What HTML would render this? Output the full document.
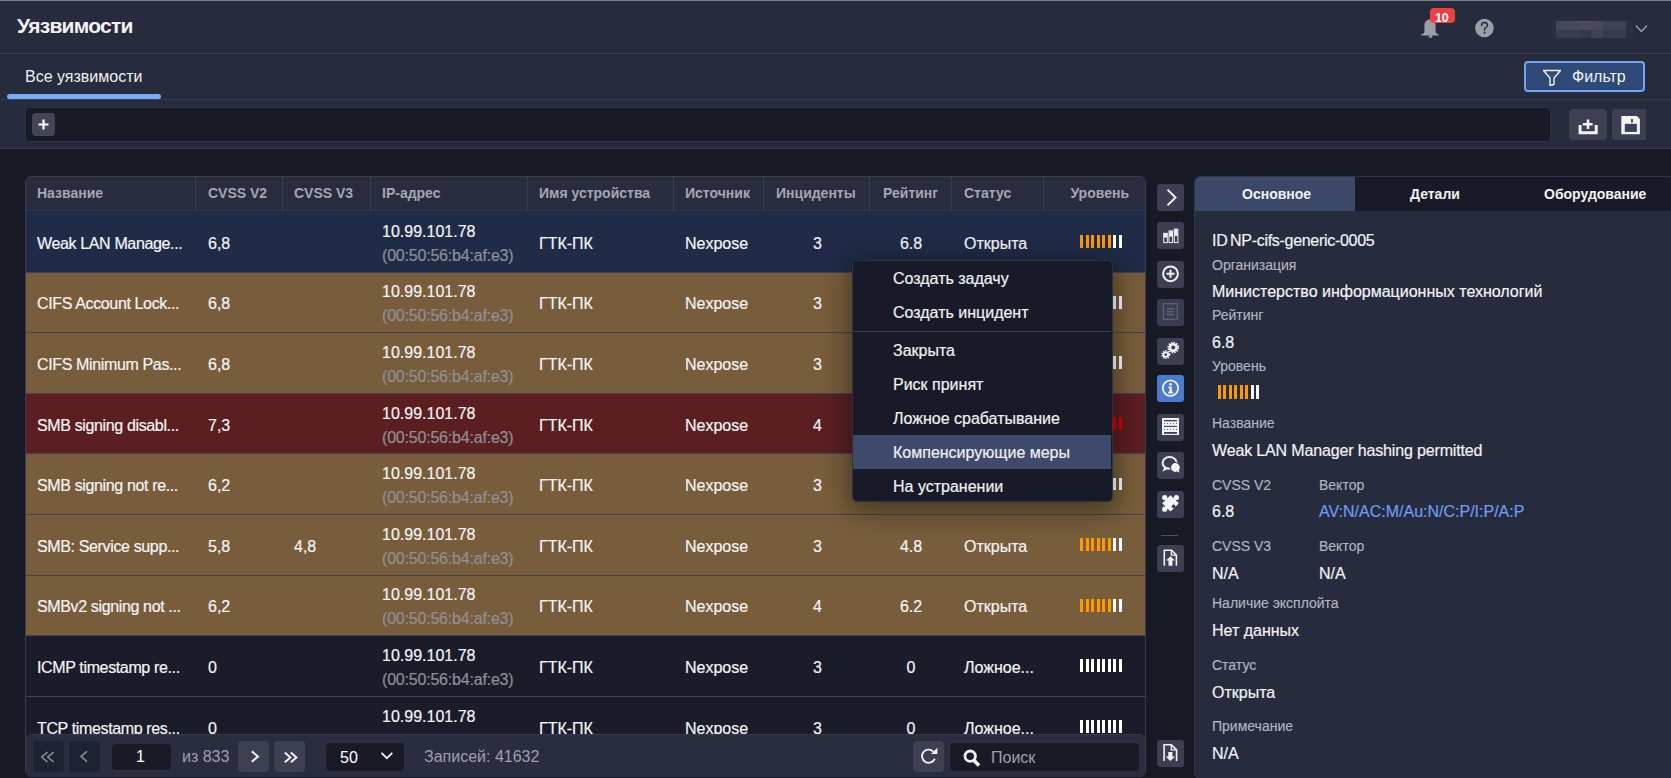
<!DOCTYPE html><html><head><meta charset="utf-8"><style>
*{box-sizing:border-box;margin:0;padding:0}
html,body{width:1671px;height:778px;overflow:hidden;background:#171925;font-family:"Liberation Sans",sans-serif;color:#fff}
.a{position:absolute}
.t{position:absolute;white-space:nowrap;line-height:1}
.hl{position:absolute;left:0;width:1671px;height:1px;background:#393d4f}
.th{position:absolute;top:186px;font-size:14px;font-weight:700;color:#a5a7b0;white-space:nowrap;line-height:1}
.cs{position:absolute;top:177px;width:1px;height:34px;background:#393d50}
.row{position:absolute;left:26px;width:1119px}
.rt{position:absolute;font-size:16px;color:#f4f4f6;white-space:nowrap;line-height:1;-webkit-text-stroke:0.2px currentColor}
.ip2{color:#8f9095;letter-spacing:-0.2px}
.bars{position:absolute;height:13px}
.bars i{position:absolute;top:0;width:3px;height:13px}
.sb{position:absolute;left:1157px;width:27px;height:27px;background:#3a3e50;border-radius:3px}
.sb svg{position:absolute;left:0;top:0}
.mi{position:absolute;left:893px;font-size:16px;color:#f0f0f2;white-space:nowrap;line-height:1;-webkit-text-stroke:0.2px currentColor}
.dl{position:absolute;left:1212px;margin-top:-1px;font-size:14px;color:#b4b6be;white-space:nowrap;line-height:1;-webkit-text-stroke:0.15px currentColor}
.dv{position:absolute;left:1212px;font-size:16px;color:#f2f2f4;white-space:nowrap;line-height:1;-webkit-text-stroke:0.2px currentColor}
.pb{position:absolute;top:741px;width:31px;height:31px;border-radius:4px}
</style></head><body>
<div class="a" style="left:0;top:0;width:1671px;height:149px;background:#262b3d"></div>
<div class="a" style="left:0;top:0;width:1671px;height:1px;background:#7f838e"></div>
<div class="t" style="left:17px;top:15px;font-size:21px;font-weight:700;color:#f2f2f4;letter-spacing:-0.75px">Уязвимости</div>
<div class="hl" style="top:53px"></div>
<div class="t" style="left:25px;top:69px;font-size:16px;color:#f0f0f2;">Все уязвимости</div>
<div class="a" style="left:7px;top:94px;width:154px;height:5px;border-radius:3px;background:#7aabf7"></div>
<div class="hl" style="top:99px"></div>
<div class="hl" style="top:148px"></div>
<svg class="a" style="left:1415px;top:15px" width="30" height="24" viewBox="0 0 30 24"><path d="M15 4.5c-3.6 0-5.6 2.6-5.6 6.2v5.8c0 1.2-1 2.4-3.4 3.2v0.9h18v-0.9c-2.4-0.8-3.4-2-3.4-3.2v-5.8c0-3.6-2-6.2-5.6-6.2z" fill="#9c9ea6"/><path d="M13.7 20.2h3.6v1.4c0 .7-.8 1.3-1.8 1.3s-1.8-.6-1.8-1.3z" fill="#9c9ea6"/></svg>
<div class="a" style="left:1430px;top:8px;width:25px;height:15px;background:#ee4043;border-radius:4px"></div>
<div class="t" style="left:1435px;top:12px;font-size:12.5px;font-weight:700;color:#fff;letter-spacing:-0.3px">10</div>
<svg class="a" style="left:1474px;top:18px" width="21" height="21" viewBox="0 0 21 21"><circle cx="10.4" cy="10" r="9.3" fill="#9c9ea6"/><path d="M7.6 7.6c0-1.8 1.3-3 2.9-3s2.9 1.1 2.9 2.7c0 1.6-1.3 2.1-2.2 2.8-.6.5-.7.9-.7 1.8" stroke="#272b3d" stroke-width="1.5" fill="none" stroke-linecap="round"/><circle cx="10.5" cy="14.6" r="1.05" fill="#272b3d"/></svg>
<div class="a" style="left:1552px;top:20px;width:81px;height:19px;background:#2b2f41"></div>
<div class="a" style="left:1556.20px;top:21px;width:11.7px;height:9px;background:#45485a"></div>
<div class="a" style="left:1556.20px;top:30px;width:11.7px;height:8px;background:#3a3d4e"></div>
<div class="a" style="left:1567.88px;top:21px;width:11.7px;height:9px;background:#434a5c"></div>
<div class="a" style="left:1567.88px;top:30px;width:11.7px;height:8px;background:#3a3c4e"></div>
<div class="a" style="left:1579.56px;top:21px;width:11.7px;height:9px;background:#494a5a"></div>
<div class="a" style="left:1579.56px;top:30px;width:11.7px;height:8px;background:#35384a"></div>
<div class="a" style="left:1591.24px;top:21px;width:11.7px;height:9px;background:#46485a"></div>
<div class="a" style="left:1591.24px;top:30px;width:11.7px;height:8px;background:#3d4252"></div>
<div class="a" style="left:1602.92px;top:21px;width:11.7px;height:9px;background:#3f4454"></div>
<div class="a" style="left:1602.92px;top:30px;width:11.7px;height:8px;background:#363a4c"></div>
<div class="a" style="left:1614.60px;top:21px;width:11.7px;height:9px;background:#3e4252"></div>
<div class="a" style="left:1614.60px;top:30px;width:11.7px;height:8px;background:#383b4d"></div>
<svg class="a" style="left:1633px;top:22px" width="16" height="12" viewBox="0 0 16 12"><path d="M2.8 3.5l5.6 5.9 5.6-5.9" stroke="#9a9ca6" stroke-width="1.5" fill="none"/></svg>
<div class="a" style="left:1524px;top:61px;width:121px;height:31px;background:#2f4a78;border:2px solid #76a6f0;border-radius:4px"></div>
<svg class="a" style="left:1542px;top:69px" width="20" height="17" viewBox="0 0 20 17"><path d="M1.5 1.5h17l-6.5 7.5v6.5l-4 1v-7.5z" stroke="#f0f0f4" stroke-width="1.4" fill="none" stroke-linejoin="round"/></svg>
<div class="t" style="left:1572px;top:69px;font-size:16px;color:#f2f2f4">Фильтр</div>
<div class="a" style="left:25px;top:107px;width:1526px;height:35px;background:#181a26;border:1px solid #30344a;border-radius:4px"></div>
<div class="a" style="left:32px;top:113px;width:23px;height:23px;background:#424657;border-radius:4px"></div>
<svg class="a" style="left:32px;top:113px" width="23" height="23" viewBox="0 0 23 23"><path d="M11.5 6.5v10M6.5 11.5h10" stroke="#fff" stroke-width="2.2"/></svg>
<div class="a" style="left:1569px;top:109px;width:38px;height:31px;background:#3c4052;border-radius:4px"></div>
<svg class="a" style="left:1569px;top:109px" width="38" height="31" viewBox="0 0 38 31"><path d="M11.1 16.1v7.6h16.1v-7.6" stroke="#f2f2f4" stroke-width="3" fill="none"/><path d="M19 10.6v9.3M13.8 15.25h9.8" stroke="#f2f2f4" stroke-width="2.6"/></svg>
<div class="a" style="left:1612px;top:109px;width:34px;height:31px;background:#3c4052;border-radius:4px 0 0 4px"></div>
<svg class="a" style="left:1612px;top:109px" width="34" height="31" viewBox="0 0 34 31"><path d="M9.3 7.1h15.6l3 3v15.1h-18.6z" fill="#f2f2f4"/><rect x="12.8" y="14.8" width="12.1" height="8.1" fill="#3c4052"/><rect x="19.1" y="10" width="1.8" height="3.6" fill="#3c4052"/></svg>
<div class="a" style="left:25px;top:176px;width:1121px;height:601px;border:1px solid #393d50;border-radius:6px;background:#1a1c29;overflow:hidden">
<div class="a" style="left:0;top:0;width:1121px;height:34px;background:#282c3e"></div>
</div>
<div class="a" style="left:26px;top:210px;width:1119px;height:1px;background:#33374a"></div>
<div class="cs" style="left:195px"></div>
<div class="cs" style="left:282px"></div>
<div class="cs" style="left:370px"></div>
<div class="cs" style="left:527px"></div>
<div class="cs" style="left:673px"></div>
<div class="cs" style="left:763px"></div>
<div class="cs" style="left:869px"></div>
<div class="cs" style="left:951px"></div>
<div class="cs" style="left:1043px"></div>
<div class="th" style="left:37px">Название</div>
<div class="th" style="left:208px">CVSS V2</div>
<div class="th" style="left:294px">CVSS V3</div>
<div class="th" style="left:382px">IP-адрес</div>
<div class="th" style="left:539px">Имя устройства</div>
<div class="th" style="left:685px">Источник</div>
<div class="th" style="left:776px">Инциденты</div>
<div class="th" style="left:883px">Рейтинг</div>
<div class="th" style="left:964px">Статус</div>
<div class="th" style="left:1029px;width:100px;text-align:right">Уровень</div>
<div class="row" style="top:211px;height:61.1px;background:#1f2b47"></div>
<div class="rt" style="left:37px;top:235.8px;letter-spacing:-0.36px">Weak LAN Manage...</div>
<div class="rt" style="left:208px;top:235.8px">6,8</div>
<div class="rt" style="left:382px;top:223.8px">10.99.101.78</div>
<div class="rt ip2" style="left:382px;top:247.8px">(00:50:56:b4:af:e3)</div>
<div class="rt" style="left:539px;top:235.8px">ГТК-ПК</div>
<div class="rt" style="left:685px;top:235.8px">Nexpose</div>
<div class="rt" style="left:813px;top:235.8px">3</div>
<div class="rt" style="left:870px;width:82px;text-align:center;top:235.8px">6.8</div>
<div class="rt" style="left:964px;top:235.8px">Открыта</div>
<div class="bars" style="left:1080px;top:235.20px;width:45px"><i style="left:0.00px;background:#ff9900;height:12.8px"></i><i style="left:5.57px;background:#ff9900;height:12.8px"></i><i style="left:11.14px;background:#ff9900;height:12.8px"></i><i style="left:16.71px;background:#ff9900;height:12.8px"></i><i style="left:22.28px;background:#ff9900;height:12.8px"></i><i style="left:27.85px;background:#ff9900;height:12.8px"></i><i style="left:33.42px;background:#ffffff;height:12.8px"></i><i style="left:38.99px;background:#ffffff;height:12.8px"></i></div>
<div class="row" style="top:272.1px;height:60.6px;background:#775d3b"></div>
<div class="a" style="left:26px;top:271.6px;width:1119px;height:1px;background:#414457"></div>
<div class="rt" style="left:37px;top:296.4px;letter-spacing:-0.36px">CIFS Account Lock...</div>
<div class="rt" style="left:208px;top:296.4px">6,8</div>
<div class="rt" style="left:382px;top:284.4px">10.99.101.78</div>
<div class="rt ip2" style="left:382px;top:308.4px">(00:50:56:b4:af:e3)</div>
<div class="rt" style="left:539px;top:296.4px">ГТК-ПК</div>
<div class="rt" style="left:685px;top:296.4px">Nexpose</div>
<div class="rt" style="left:813px;top:296.4px">3</div>
<div class="rt" style="left:870px;width:82px;text-align:center;top:296.4px">6.8</div>
<div class="rt" style="left:964px;top:296.4px">Открыта</div>
<div class="bars" style="left:1080px;top:295.80px;width:45px"><i style="left:0.00px;background:#ff9900;height:12.8px"></i><i style="left:5.57px;background:#ff9900;height:12.8px"></i><i style="left:11.14px;background:#ff9900;height:12.8px"></i><i style="left:16.71px;background:#ff9900;height:12.8px"></i><i style="left:22.28px;background:#ff9900;height:12.8px"></i><i style="left:27.85px;background:#ff9900;height:12.8px"></i><i style="left:33.42px;background:#ffffff;height:12.8px"></i><i style="left:38.99px;background:#ffffff;height:12.8px"></i></div>
<div class="row" style="top:332.7px;height:60.6px;background:#775d3b"></div>
<div class="a" style="left:26px;top:332.2px;width:1119px;height:1px;background:#414457"></div>
<div class="rt" style="left:37px;top:357.0px;letter-spacing:-0.36px">CIFS Minimum Pas...</div>
<div class="rt" style="left:208px;top:357.0px">6,8</div>
<div class="rt" style="left:382px;top:345.0px">10.99.101.78</div>
<div class="rt ip2" style="left:382px;top:369.0px">(00:50:56:b4:af:e3)</div>
<div class="rt" style="left:539px;top:357.0px">ГТК-ПК</div>
<div class="rt" style="left:685px;top:357.0px">Nexpose</div>
<div class="rt" style="left:813px;top:357.0px">3</div>
<div class="rt" style="left:870px;width:82px;text-align:center;top:357.0px">6.8</div>
<div class="rt" style="left:964px;top:357.0px">Открыта</div>
<div class="bars" style="left:1080px;top:356.40px;width:45px"><i style="left:0.00px;background:#ff9900;height:12.8px"></i><i style="left:5.57px;background:#ff9900;height:12.8px"></i><i style="left:11.14px;background:#ff9900;height:12.8px"></i><i style="left:16.71px;background:#ff9900;height:12.8px"></i><i style="left:22.28px;background:#ff9900;height:12.8px"></i><i style="left:27.85px;background:#ff9900;height:12.8px"></i><i style="left:33.42px;background:#ffffff;height:12.8px"></i><i style="left:38.99px;background:#ffffff;height:12.8px"></i></div>
<div class="row" style="top:393.3px;height:60.6px;background:#5b1f22"></div>
<div class="a" style="left:26px;top:392.8px;width:1119px;height:1px;background:#414457"></div>
<div class="rt" style="left:37px;top:417.6px;letter-spacing:-0.36px">SMB signing disabl...</div>
<div class="rt" style="left:208px;top:417.6px">7,3</div>
<div class="rt" style="left:382px;top:405.6px">10.99.101.78</div>
<div class="rt ip2" style="left:382px;top:429.6px">(00:50:56:b4:af:e3)</div>
<div class="rt" style="left:539px;top:417.6px">ГТК-ПК</div>
<div class="rt" style="left:685px;top:417.6px">Nexpose</div>
<div class="rt" style="left:813px;top:417.6px">4</div>
<div class="rt" style="left:870px;width:82px;text-align:center;top:417.6px">7.3</div>
<div class="rt" style="left:964px;top:417.6px">Открыта</div>
<div class="bars" style="left:1080px;top:417.00px;width:45px"><i style="left:0.00px;background:#dd0000;height:12.8px"></i><i style="left:5.57px;background:#dd0000;height:12.8px"></i><i style="left:11.14px;background:#dd0000;height:12.8px"></i><i style="left:16.71px;background:#dd0000;height:12.8px"></i><i style="left:22.28px;background:#dd0000;height:12.8px"></i><i style="left:27.85px;background:#dd0000;height:12.8px"></i><i style="left:33.42px;background:#dd0000;height:12.8px"></i><i style="left:38.99px;background:#dd0000;height:12.8px"></i></div>
<div class="row" style="top:453.9px;height:60.6px;background:#775d3b"></div>
<div class="a" style="left:26px;top:453.4px;width:1119px;height:1px;background:#414457"></div>
<div class="rt" style="left:37px;top:478.2px;letter-spacing:-0.36px">SMB signing not re...</div>
<div class="rt" style="left:208px;top:478.2px">6,2</div>
<div class="rt" style="left:382px;top:466.2px">10.99.101.78</div>
<div class="rt ip2" style="left:382px;top:490.2px">(00:50:56:b4:af:e3)</div>
<div class="rt" style="left:539px;top:478.2px">ГТК-ПК</div>
<div class="rt" style="left:685px;top:478.2px">Nexpose</div>
<div class="rt" style="left:813px;top:478.2px">3</div>
<div class="rt" style="left:870px;width:82px;text-align:center;top:478.2px">6.2</div>
<div class="rt" style="left:964px;top:478.2px">Открыта</div>
<div class="bars" style="left:1080px;top:477.60px;width:45px"><i style="left:0.00px;background:#ff9900;height:12.8px"></i><i style="left:5.57px;background:#ff9900;height:12.8px"></i><i style="left:11.14px;background:#ff9900;height:12.8px"></i><i style="left:16.71px;background:#ff9900;height:12.8px"></i><i style="left:22.28px;background:#ff9900;height:12.8px"></i><i style="left:27.85px;background:#ff9900;height:12.8px"></i><i style="left:33.42px;background:#ffffff;height:12.8px"></i><i style="left:38.99px;background:#ffffff;height:12.8px"></i></div>
<div class="row" style="top:514.5px;height:60.6px;background:#775d3b"></div>
<div class="a" style="left:26px;top:514.0px;width:1119px;height:1px;background:#414457"></div>
<div class="rt" style="left:37px;top:538.8px;letter-spacing:-0.36px">SMB: Service supp...</div>
<div class="rt" style="left:208px;top:538.8px">5,8</div>
<div class="rt" style="left:294px;top:538.8px">4,8</div>
<div class="rt" style="left:382px;top:526.8px">10.99.101.78</div>
<div class="rt ip2" style="left:382px;top:550.8px">(00:50:56:b4:af:e3)</div>
<div class="rt" style="left:539px;top:538.8px">ГТК-ПК</div>
<div class="rt" style="left:685px;top:538.8px">Nexpose</div>
<div class="rt" style="left:813px;top:538.8px">3</div>
<div class="rt" style="left:870px;width:82px;text-align:center;top:538.8px">4.8</div>
<div class="rt" style="left:964px;top:538.8px">Открыта</div>
<div class="bars" style="left:1080px;top:538.20px;width:45px"><i style="left:0.00px;background:#ff9900;height:12.8px"></i><i style="left:5.57px;background:#ff9900;height:12.8px"></i><i style="left:11.14px;background:#ff9900;height:12.8px"></i><i style="left:16.71px;background:#ff9900;height:12.8px"></i><i style="left:22.28px;background:#ff9900;height:12.8px"></i><i style="left:27.85px;background:#ff9900;height:12.8px"></i><i style="left:33.42px;background:#ffffff;height:12.8px"></i><i style="left:38.99px;background:#ffffff;height:12.8px"></i></div>
<div class="row" style="top:575.1px;height:60.6px;background:#775d3b"></div>
<div class="a" style="left:26px;top:574.6px;width:1119px;height:1px;background:#414457"></div>
<div class="rt" style="left:37px;top:599.4px;letter-spacing:-0.36px">SMBv2 signing not ...</div>
<div class="rt" style="left:208px;top:599.4px">6,2</div>
<div class="rt" style="left:382px;top:587.4px">10.99.101.78</div>
<div class="rt ip2" style="left:382px;top:611.4px">(00:50:56:b4:af:e3)</div>
<div class="rt" style="left:539px;top:599.4px">ГТК-ПК</div>
<div class="rt" style="left:685px;top:599.4px">Nexpose</div>
<div class="rt" style="left:813px;top:599.4px">4</div>
<div class="rt" style="left:870px;width:82px;text-align:center;top:599.4px">6.2</div>
<div class="rt" style="left:964px;top:599.4px">Открыта</div>
<div class="bars" style="left:1080px;top:598.80px;width:45px"><i style="left:0.00px;background:#ff9900;height:12.8px"></i><i style="left:5.57px;background:#ff9900;height:12.8px"></i><i style="left:11.14px;background:#ff9900;height:12.8px"></i><i style="left:16.71px;background:#ff9900;height:12.8px"></i><i style="left:22.28px;background:#ff9900;height:12.8px"></i><i style="left:27.85px;background:#ff9900;height:12.8px"></i><i style="left:33.42px;background:#ffffff;height:12.8px"></i><i style="left:38.99px;background:#ffffff;height:12.8px"></i></div>
<div class="row" style="top:635.7px;height:60.6px;background:#1a1c29"></div>
<div class="a" style="left:26px;top:635.2px;width:1119px;height:1px;background:#414457"></div>
<div class="rt" style="left:37px;top:660.0px;letter-spacing:-0.36px">ICMP timestamp re...</div>
<div class="rt" style="left:208px;top:660.0px">0</div>
<div class="rt" style="left:382px;top:648.0px">10.99.101.78</div>
<div class="rt ip2" style="left:382px;top:672.0px">(00:50:56:b4:af:e3)</div>
<div class="rt" style="left:539px;top:660.0px">ГТК-ПК</div>
<div class="rt" style="left:685px;top:660.0px">Nexpose</div>
<div class="rt" style="left:813px;top:660.0px">3</div>
<div class="rt" style="left:870px;width:82px;text-align:center;top:660.0px">0</div>
<div class="rt" style="left:964px;top:660.0px">Ложное...</div>
<div class="bars" style="left:1080px;top:659.40px;width:45px"><i style="left:0.00px;background:#ffffff;height:12.8px"></i><i style="left:5.57px;background:#ffffff;height:12.8px"></i><i style="left:11.14px;background:#ffffff;height:12.8px"></i><i style="left:16.71px;background:#ffffff;height:12.8px"></i><i style="left:22.28px;background:#ffffff;height:12.8px"></i><i style="left:27.85px;background:#ffffff;height:12.8px"></i><i style="left:33.42px;background:#ffffff;height:12.8px"></i><i style="left:38.99px;background:#ffffff;height:12.8px"></i></div>
<div class="row" style="top:696.3px;height:60.6px;background:#1a1c29"></div>
<div class="a" style="left:26px;top:695.8px;width:1119px;height:1px;background:#414457"></div>
<div class="rt" style="left:37px;top:720.6px;letter-spacing:-0.36px">TCP timestamp res...</div>
<div class="rt" style="left:208px;top:720.6px">0</div>
<div class="rt" style="left:382px;top:708.6px">10.99.101.78</div>
<div class="rt ip2" style="left:382px;top:732.6px">(00:50:56:b4:af:e3)</div>
<div class="rt" style="left:539px;top:720.6px">ГТК-ПК</div>
<div class="rt" style="left:685px;top:720.6px">Nexpose</div>
<div class="rt" style="left:813px;top:720.6px">3</div>
<div class="rt" style="left:870px;width:82px;text-align:center;top:720.6px">0</div>
<div class="rt" style="left:964px;top:720.6px">Ложное...</div>
<div class="bars" style="left:1080px;top:720.00px;width:45px"><i style="left:0.00px;background:#ffffff;height:12.8px"></i><i style="left:5.57px;background:#ffffff;height:12.8px"></i><i style="left:11.14px;background:#ffffff;height:12.8px"></i><i style="left:16.71px;background:#ffffff;height:12.8px"></i><i style="left:22.28px;background:#ffffff;height:12.8px"></i><i style="left:27.85px;background:#ffffff;height:12.8px"></i><i style="left:33.42px;background:#ffffff;height:12.8px"></i><i style="left:38.99px;background:#ffffff;height:12.8px"></i></div>
<div class="a" style="left:26px;top:733.5px;width:1119px;height:43.5px;background:#292d3f;border-top:1px solid #353a4c;border-radius:6px"></div>
<div class="pb" style="left:33px;background:#1f2231"><svg width="31" height="31" viewBox="0 0 31 31"><path d="M14.5 11.2l-5.8 4.8 5.8 5M20.6 11.2l-5.8 4.8 5.8 5" stroke="#8f919a" stroke-width="1.5" fill="none"/></svg></div>
<div class="pb" style="left:69px;background:#1f2231"><svg width="31" height="31" viewBox="0 0 31 31"><path d="M18 10.4l-6 5 6 5.3" stroke="#8f919a" stroke-width="1.5" fill="none"/></svg></div>
<div class="a" style="left:111px;top:743px;width:61px;height:28px;background:#181a26;border:1px solid #2c3042;border-radius:4px"></div>
<div class="t" style="left:136px;top:749px;font-size:16px;color:#fff">1</div>
<div class="t" style="left:182px;top:749px;font-size:16px;color:#9fa1aa">из 833</div>
<div class="pb" style="left:238px;background:#3c4052"><svg width="31" height="31" viewBox="0 0 31 31"><path d="M13.8 10.4l6.2 5-6.2 5.3" stroke="#f2f2f4" stroke-width="2" fill="none"/></svg></div>
<div class="pb" style="left:274px;background:#3c4052"><svg width="31" height="31" viewBox="0 0 31 31"><path d="M10.8 11.6l5.6 4.8-5.6 4.8M16.8 11.6l5.6 4.8-5.6 4.8" stroke="#f2f2f4" stroke-width="2" fill="none"/></svg></div>
<div class="a" style="left:325px;top:742px;width:80px;height:30px;background:#181a26;border:1px solid #2c3042;border-radius:4px"></div>
<div class="t" style="left:340px;top:750px;font-size:16px;color:#fff">50</div>
<svg class="a" style="left:379px;top:749px" width="16" height="14" viewBox="0 0 16 14"><path d="M2.5 3.8l5.4 5.4 5.4-5.4" stroke="#f2f2f4" stroke-width="1.8" fill="none"/></svg>
<div class="t" style="left:424px;top:749px;font-size:16px;color:#9fa1aa">Записей: 41632</div>
<div class="pb" style="left:913px;background:#3c4052"><svg width="31" height="31" viewBox="0 0 31 31"><path d="M20.4 10.6A6.6 6.6 0 1 0 21.8 17.6" stroke="#f2f2f4" stroke-width="1.8" fill="none"/><path d="M18 13h6.4V6.8z" fill="#f2f2f4"/></svg></div>
<div class="a" style="left:949px;top:742px;width:191px;height:30px;background:#181a26;border:1px solid #2c3042;border-radius:5px"></div>
<svg class="a" style="left:960px;top:747px" width="24" height="22" viewBox="0 0 24 22"><circle cx="10.2" cy="9.2" r="5.2" stroke="#f2f2f4" stroke-width="2.8" fill="none"/><path d="M13.6 13l5.4 5.6" stroke="#f2f2f4" stroke-width="3.6"/></svg>
<div class="t" style="left:991px;top:750px;font-size:16px;color:#9fa1aa">Поиск</div>
<div class="sb" style="top:184px;background:#3b3f51"><svg width="27" height="27" viewBox="0 0 27 27"><path d="M10.5 5.6l8 7.9-8 7.9" stroke="#f2f2f4" stroke-width="2" fill="none"/></svg></div>
<div class="sb" style="top:222px;background:#3b3f51"><svg width="27" height="27" viewBox="0 0 27 27"><rect x="6.7" y="11.3" width="3.6" height="9.3" fill="none" stroke="#f2f2f4" stroke-width="1"/><rect x="12" y="8.9" width="3.6" height="11.7" fill="none" stroke="#f2f2f4" stroke-width="1"/><rect x="17.3" y="7.1" width="3.6" height="13.5" fill="none" stroke="#f2f2f4" stroke-width="1"/><rect x="7" y="11.5" width="3" height="4" fill="#f2f2f4"/><rect x="12.3" y="9.2" width="3" height="5.5" fill="#f2f2f4"/><rect x="17.6" y="7.4" width="3" height="6.5" fill="#f2f2f4"/></svg></div>
<div class="sb" style="top:261px;background:#3b3f51"><svg width="27" height="27" viewBox="0 0 27 27"><circle cx="13.5" cy="12.8" r="7.4" stroke="#f2f2f4" stroke-width="2" fill="none"/><path d="M13.5 8.8v8M9.5 12.8h8" stroke="#f2f2f4" stroke-width="2"/></svg></div>
<div class="sb" style="top:299px;background:#383c4e"><svg width="27" height="27" viewBox="0 0 27 27"><rect x="6.3" y="4.8" width="14" height="15.4" stroke="#6a6d7a" stroke-width="1" fill="none"/><path d="M9.5 10h7.4M9.5 12.8h7.4M9.5 15.6h7.4" stroke="#5f6270" stroke-width="1.6"/></svg></div>
<div class="sb" style="top:338px;background:#3b3f51"><svg width="27" height="27" viewBox="0 0 27 27"><g fill="#f2f2f4"><circle cx="16.2" cy="9.6" r="4.6"/><circle cx="8.8" cy="16.6" r="3.2"/></g><g stroke="#f2f2f4" stroke-width="1.8" stroke-dasharray="1.4 1.2"><circle cx="16.2" cy="9.6" r="5" fill="none"/><circle cx="8.8" cy="16.6" r="3.6" fill="none" stroke-dasharray="1.2 1.1"/></g><circle cx="16.2" cy="9.6" r="2" fill="#3b3f51"/><circle cx="8.8" cy="16.6" r="1.3" fill="#3b3f51"/></svg></div>
<div class="sb" style="top:375px;background:#4b7bcc"><svg width="27" height="27" viewBox="0 0 27 27"><circle cx="13.5" cy="13.1" r="7.7" stroke="#f2f2f4" stroke-width="1.8" fill="none"/><circle cx="13.6" cy="9.3" r="1.4" fill="#f2f2f4"/><path d="M11.3 11.4h3.5v5.4h1.3v1.6h-4.9v-1.6h1.3v-3.8h-1.2z" fill="#f2f2f4"/></svg></div>
<div class="sb" style="top:414px;background:#3b3f51"><svg width="27" height="27" viewBox="0 0 27 27"><rect x="5" y="4" width="17" height="17" fill="#f2f2f4"/><rect x="7" y="6" width="13" height="1.3" fill="#3b3f51"/><rect x="7" y="11.8" width="13" height="1.1" fill="#3b3f51"/><rect x="7" y="18" width="13" height="1.8" fill="#3b3f51"/><path d="M7 9.5h13M7 15.4h13" stroke="#5a5e70" stroke-width="1" stroke-dasharray="1 2"/></svg></div>
<div class="sb" style="top:452px;background:#3b3f51"><svg width="27" height="27" viewBox="0 0 27 27"><ellipse cx="12.6" cy="10.9" rx="7" ry="5.8" stroke="#f2f2f4" stroke-width="2" fill="none"/><path d="M7.6 15l-2.4 4.8 5.6-2.8z" fill="#f2f2f4"/><circle cx="18.4" cy="15.5" r="5.6" fill="#3b3f51"/><circle cx="18.4" cy="15.5" r="4.4" fill="#f2f2f4"/><path d="M19.8 19l2.8 1.8-1-3.6z" fill="#f2f2f4"/></svg></div>
<div class="sb" style="top:491px;background:#3b3f51"><svg width="27" height="27" viewBox="0 0 27 27"><g fill="#f2f2f4"><path d="M13.5 4.3L21.9 12.3L13.5 20.6L5.2 12.3z"/><circle cx="7.7" cy="6.5" r="2.6"/><circle cx="19.4" cy="6.5" r="2.6"/><circle cx="7.7" cy="18.2" r="2.6"/><path d="M8 8h11v4.5h-2.5l-4 4.5v1h-4.5z"/></g><circle cx="16.6" cy="15.4" r="1.8" fill="#3b3f51"/></svg></div>
<div class="a" style="left:1161px;top:534.5px;width:17px;height:1.5px;background:#4e5262"></div>
<div class="sb" style="top:545px;background:#3b3f51"><svg width="27" height="27" viewBox="0 0 27 27"><path d="M7.3 20.7V5.3h7.2l4.9 4.9v10.5" stroke="#f2f2f4" stroke-width="1.6" fill="none"/><path d="M14.4 5.3v4.9h4.9" stroke="#f2f2f4" stroke-width="1.3" fill="none"/><path d="M13.5 11.3l4.4 4.3h-2.4v5.1h-4v-5.1h-2.4z" fill="#f2f2f4"/></svg></div>
<div class="sb" style="top:740px;background:#3b3f51"><svg width="27" height="27" viewBox="0 0 27 27"><path d="M7.1 20.9V4.8h7.2l5.3 5.1v11" stroke="#f2f2f4" stroke-width="1.6" fill="none"/><path d="M14.3 4.8v5.1h5.3" stroke="#f2f2f4" stroke-width="1.3" fill="none"/><path d="M11.3 11.9h4.1v4.7h2.6l-4.65 4.4-4.65-4.4h2.6z" fill="#f2f2f4"/></svg></div>
<div class="a" style="left:1194px;top:176px;width:480px;height:603px;background:#272b3e;border-radius:6px;overflow:hidden;border:1px solid #313449">
<div class="a" style="left:0;top:0;width:480px;height:33.5px;background:#181a27"></div>
<div class="a" style="left:0;top:0;width:160px;height:33.5px;background:#3c4868"></div>
</div>
<div class="t" style="left:1242px;top:187px;font-size:14px;font-weight:700;color:#f2f2f4">Основное</div>
<div class="t" style="left:1410px;top:187px;font-size:14px;font-weight:700;color:#f2f2f4">Детали</div>
<div class="t" style="left:1544px;top:187px;font-size:14px;font-weight:700;color:#f2f2f4">Оборудование</div>
<div class="dv" style="top:233px;letter-spacing:-0.3px;word-spacing:-1.5px">ID NP-cifs-generic-0005</div>
<div class="dl" style="top:259px">Организация</div>
<div class="dv" style="top:284px">Министерство информационных технологий</div>
<div class="dl" style="top:309px">Рейтинг</div>
<div class="dv" style="top:335px">6.8</div>
<div class="dl" style="top:360px">Уровень</div>
<div class="bars" style="left:1218px;top:385px;width:45px"><i style="left:0px;background:#ff9900;height:14px"></i><i style="left:5px;background:#ff9900;height:14px"></i><i style="left:11px;background:#ff9900;height:14px"></i><i style="left:16px;background:#ff9900;height:14px"></i><i style="left:22px;background:#ff9900;height:14px"></i><i style="left:27px;background:#ff9900;height:14px"></i><i style="left:33px;background:#ffffff;height:14px"></i><i style="left:38px;background:#ffffff;height:14px"></i></div>
<div class="dl" style="top:417px">Название</div>
<div class="dv" style="top:443px;letter-spacing:-0.15px">Weak LAN Manager hashing permitted</div>
<div class="dl" style="top:479px">CVSS V2</div>
<div class="dl" style="top:479px;left:1319px">Вектор</div>
<div class="dv" style="top:504px">6.8</div>
<div class="dv" style="top:504px;left:1319px;color:#6e9cf0">AV:N/AC:M/Au:N/C:P/I:P/A:P</div>
<div class="dl" style="top:540px">CVSS V3</div>
<div class="dl" style="top:540px;left:1319px">Вектор</div>
<div class="dv" style="top:566px">N/A</div>
<div class="dv" style="top:566px;left:1319px">N/A</div>
<div class="dl" style="top:597px">Наличие эксплойта</div>
<div class="dv" style="top:623px">Нет данных</div>
<div class="dl" style="top:659px">Статус</div>
<div class="dv" style="top:685px">Открыта</div>
<div class="dl" style="top:720px">Примечание</div>
<div class="dv" style="top:746px">N/A</div>
<div class="a" style="left:852px;top:260px;width:260.5px;height:241.5px;background:#181a27;border:1px solid #2e3244;border-radius:5px;box-shadow:0 6px 26px 4px rgba(0,0,0,.38)"></div>
<div class="a" style="left:853px;top:331px;width:258px;height:1px;background:#3a3e50"></div>
<div class="a" style="left:853px;top:435px;width:258px;height:34px;background:#3d4a6b"></div>
<div class="mi" style="top:271.0px">Создать задачу</div>
<div class="mi" style="top:305.0px">Создать инцидент</div>
<div class="mi" style="top:343.0px">Закрыта</div>
<div class="mi" style="top:377.0px">Риск принят</div>
<div class="mi" style="top:411.0px">Ложное срабатывание</div>
<div class="mi" style="top:444.5px">Компенсирующие меры</div>
<div class="mi" style="top:478.5px">На устранении</div>
</body></html>
